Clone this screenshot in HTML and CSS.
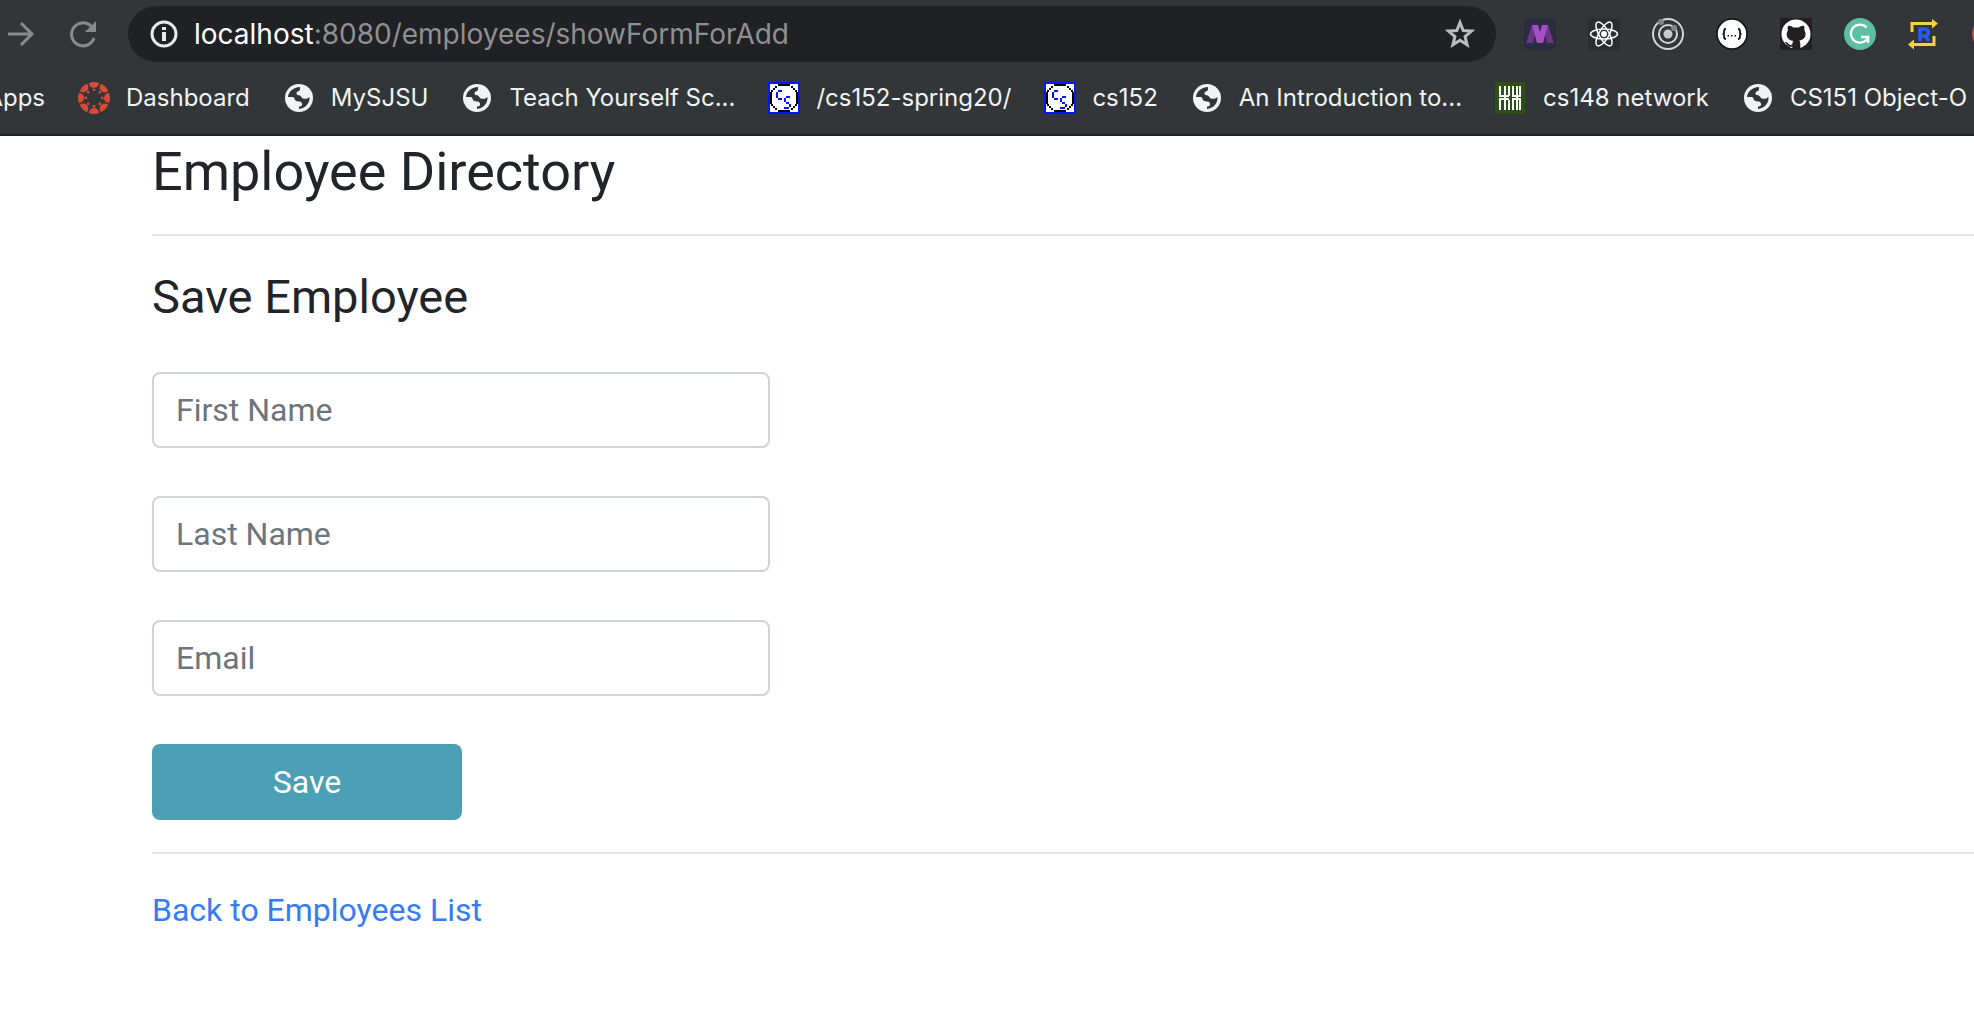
FILE: index.html
```
<!DOCTYPE html>
<html lang="en">
<head>
<meta charset="utf-8">
<title>Save Employee</title>
<link rel="stylesheet" href="styles.css">
</head>
<body>
<svg class="defs" aria-hidden="true">
  <symbol id="globe" viewBox="0 0 32 32">
    <circle cx="16" cy="16" r="14" fill="#f1f3f4"/>
    <path d="M5 15C5.500 9.500 10 5.500 17 5v2.500C17 9.500 13.500 9 13.500 11.500c0 2.500 3.500 1 4.500 3 1 2.500 5 3.500 8.500.500C27 21.500 22 26.500 16 27v-2.500c3.500 0 3.500-2 2.500-4-1-1.500-3.500 0-6-2C11 17 12 15 9 15z" fill="#323639"/>
  </symbol>
  <symbol id="cs" viewBox="0 0 32 32" shape-rendering="crispEdges">
    <path fill="#0018f5" d="M0 0h32v32H0z"/>
    <path fill="#fff" d="M2 2h28v28H2z"/>
    <path d="M10 3h12M10 29h12M3 10v12M29 10v12M8 4v2M6 6v2M4 8v2M24 4v2M26 6v2M28 8v2M8 26v2M6 24v2M4 22v2M24 26v2M26 24v2M28 22v2" fill="none" stroke="#000" stroke-width="2"/>
    <path d="M14 9h-4M9 10v6M10 17h4M22 15h-4M17 16v4M18 21h3M22 22v3M21 26h-5" fill="none" stroke="#0018f5" stroke-width="2"/>
  </symbol>
</svg>

<header class="browser">
  <div class="toolbar">
    <button class="icon-btn" aria-label="Forward">
      <svg viewBox="0 0 32 32"><path d="M4 16h24M17 5l11 11-11 11" fill="none" stroke="#8a8b8c" stroke-width="3"/></svg>
    </button>
    <button class="icon-btn" aria-label="Reload">
      <svg viewBox="0 0 32 32"><path d="M28 20A11.500 11.500 0 1 1 25 8" fill="none" stroke="#8a8b8c" stroke-width="3"/><path d="M30 3v11H19z" fill="#8a8b8c"/></svg>
    </button>
    <div class="omnibox">
      <svg class="icon" viewBox="0 0 32 32"><circle cx="16" cy="16" r="12" fill="none" stroke="#e8eaed" stroke-width="3"/><path d="M14 9h4v3h-4zM14 14h4v9h-4z" fill="#e8eaed"/></svg>
      <span class="url"><span class="host">localhost</span>:8080/employees/showFormForAdd</span>
      <svg class="icon" viewBox="0 0 32 32"><path d="M16 4.500l3.200 8 8.300.600-6.400 5.400 2 8.300-7.100-4.500-7.100 4.500 2-8.300-6.400-5.400 8.300-.600z" fill="none" stroke="#bdbdbd" stroke-width="3"/></svg>
    </div>
    <div class="extensions">
      <svg class="icon" viewBox="0 0 32 32"><rect width="32" height="32" rx="3" fill="#2b2c42"/><path d="M8 7h5L9 25H2zM19 7h5l6 18h-7z" fill="#6d3585"/><path d="M8 7h6l2 7 2-7h6l-5 18h-6z" fill="#a24fbf"/></svg>
      <svg class="icon" viewBox="0 0 32 32"><rect width="32" height="32" rx="3" fill="#2b2e30"/><g fill="none" stroke="#fff" stroke-width="1.500"><ellipse cx="16" cy="16" rx="13.500" ry="5"/><ellipse cx="16" cy="16" rx="13.500" ry="5" transform="rotate(60 16 16)"/><ellipse cx="16" cy="16" rx="13.500" ry="5" transform="rotate(120 16 16)"/></g><circle cx="16" cy="16" r="3" fill="#fff"/></svg>
      <svg class="icon" viewBox="0 0 32 32"><g fill="none" stroke="#d4d4d4" stroke-width="2"><circle cx="16" cy="16" r="15"/><circle cx="16" cy="16" r="9"/></g><circle cx="16" cy="16" r="4.500" fill="#c9c9c9"/><circle cx="9" cy="4" r="3" fill="#858687"/><circle cx="22" cy="10" r="3" fill="#858687"/></svg>
      <svg class="icon" viewBox="0 0 32 32"><circle cx="16" cy="16" r="15" fill="#fff" stroke="#111" stroke-width="1.500"/><path d="M10 11c-4 0 0 5-3.500 5 3.500 0-.500 5 3.500 5M22 11c4 0 0 5 3.500 5-3.500 0 .500 5-3.500 5" fill="none" stroke="#111" stroke-width="1.800"/><path d="M11.500 17h1.500v1.500h-1.500zM15 17h1.500v1.500H15zM18.500 17h1.500v1.500h-1.500z" fill="#111"/></svg>
      <svg class="icon" viewBox="0 0 32 32"><path d="M0 0h32v32H0z" fill="#231f20"/><circle cx="16" cy="16" r="14.500" fill="#fff"/><path d="M8 8c2-.500 4 .500 5 1.500h6C20 8.500 22 7.500 24 8c.700 2 .500 3 .300 4 2.500 4 1.700 9.500-5 10.500.700 1 1 2 1 3.500V32h-8v-3.500c-4 1-5-1-6-2.500-.500-1-1.500-1.500-1.500-2 2-.500 3 1 4 2.200 1 1 2.500.800 3.500.300 0-1.500.500-2.500 1-3.500-6.500-1-8-6.500-5.300-11C7.500 11 7.500 9.500 8 8z" fill="#231f20"/></svg>
      <svg class="icon" viewBox="0 0 32 32"><circle cx="16" cy="16" r="16" fill="#5cc0a0"/><path d="M22.500 9.500a9 9 0 1 0 1 11" fill="none" stroke="#fff" stroke-width="2.200"/><path d="M17 19h7v6" fill="none" stroke="#fff" stroke-width="2.500"/></svg>
      <svg class="icon" viewBox="0 0 32 32"><path d="M4 14V5.500h20M26 18v8.500H6" fill="none" stroke="#f6d33c" stroke-width="3"/><path d="M24 1l6 4.500-6 5zM6 21.500v10l-6-5z" fill="#f6d33c"/><path d="M12 23V11h5a3 3 0 0 1 0 7h-5M16 17l5 6" fill="none" stroke="#2b5bea" stroke-width="3.500"/></svg>
      <svg class="icon" viewBox="0 0 32 32"><circle cx="16" cy="16" r="16" fill="#c0504d"/></svg>
    </div>
  </div>
  <nav class="bookmarks" aria-label="Bookmarks">
    <a class="bookmark apps" href="#">Apps</a>
    <a class="bookmark" href="#"><svg class="icon" viewBox="0 0 32 32"><defs><g id="petal"><path d="M11 1Q16-1 21 1A5 5 0 0 1 11 1z"/><circle cx="16" cy="7.800" r="1.400"/></g></defs><g fill="#d84b37"><use href="#petal"/><use href="#petal" transform="rotate(45 16 16)"/><use href="#petal" transform="rotate(90 16 16)"/><use href="#petal" transform="rotate(135 16 16)"/><use href="#petal" transform="rotate(180 16 16)"/><use href="#petal" transform="rotate(225 16 16)"/><use href="#petal" transform="rotate(270 16 16)"/><use href="#petal" transform="rotate(315 16 16)"/></g></svg>Dashboard</a>
    <a class="bookmark" href="#"><svg class="icon"><use href="#globe"/></svg>MySJSU</a>
    <a class="bookmark" href="#"><svg class="icon"><use href="#globe"/></svg>Teach Yourself Sc...</a>
    <a class="bookmark" href="#"><svg class="icon"><use href="#cs"/></svg>/cs152-spring20/</a>
    <a class="bookmark" href="#"><svg class="icon"><use href="#cs"/></svg>cs152</a>
    <a class="bookmark" href="#"><svg class="icon"><use href="#globe"/></svg>An Introduction to...</a>
    <a class="bookmark" href="#"><svg class="icon" viewBox="0 0 32 32"><path d="M0 0h30v32H0z" fill="#2d5016"/><path d="M5 4v10M10 4v10M14 4v10M18 4v10M22 4v10M25 4v10M5 18v10M10 15v13M14 18v10M18 18v10M22 15v13M25 18v10M4 14h10M17 14h9M4 17h10M17 17h9" fill="none" stroke="#fff" stroke-width="2"/></svg>cs148 network</a>
    <a class="bookmark" href="#"><svg class="icon"><use href="#globe"/></svg>CS151 Object-O</a>
  </nav>
</header>

<main class="page">
  <h1 class="title">Employee Directory</h1>
  <hr class="rule">
  <h2 class="subtitle">Save Employee</h2>
  <form class="form">
    <input class="field" type="text" placeholder="First Name" aria-label="First Name">
    <input class="field" type="text" placeholder="Last Name" aria-label="Last Name">
    <input class="field" type="email" placeholder="Email" aria-label="Email">
    <button class="save" type="submit">Save</button>
  </form>
  <hr class="rule">
  <a class="back" href="#">Back to Employees List</a>
</main>
</body>
</html>
```
FILE: styles.css
```
* {
  box-sizing: border-box;
}

body {
  margin: 0;
  background: #fff;
  color: #212529;
  font-family: Roboto, "Liberation Sans", sans-serif;
  font-size: 32px;
  line-height: 48px;
  overflow-x: hidden;
}

.defs {
  position: absolute;
  width: 0;
  height: 0;
}

.icon {
  display: block;
  flex: none;
  width: 32px;
  height: 32px;
}

/* Browser chrome */

.browser {
  background: #323639;
  border-bottom: 2px solid #202124;
  font-family: Inter, "Liberation Sans", sans-serif;
  overflow: hidden;
}

.toolbar {
  display: flex;
  align-items: center;
  gap: 28px;
  padding: 6px 0 6px 4px;
}

.icon-btn {
  flex: none;
  width: 34px;
  height: 32px;
  padding: 0;
  border: 0;
  background: none;
}

.icon-btn svg {
  display: block;
  width: 32px;
  height: 32px;
}

.omnibox {
  display: flex;
  flex: 1;
  align-items: center;
  gap: 14px;
  min-width: 0;
  height: 56px;
  padding: 0 20px;
  border-radius: 28px;
  background: #202124;
}

.url {
  flex: 1;
  overflow: hidden;
  color: #8f9092;
  font-size: 28px;
  line-height: 40px;
  white-space: nowrap;
}

.host {
  color: #fff;
}

.extensions {
  display: flex;
  flex: 0 0 450px;
  gap: 32px;
  overflow: hidden;
}

.bookmarks {
  display: flex;
  align-items: center;
  gap: 33px;
  padding: 14px 0 20px;
}

.bookmark {
  display: flex;
  flex: none;
  align-items: center;
  gap: 16px;
  color: #f1f3f4;
  font-size: 24px;
  line-height: 32px;
  text-decoration: none;
  white-space: nowrap;
}

.apps {
  justify-content: flex-end;
  width: 45px;
}

/* Page */

.page {
  padding: 2px 0 32px 152px;
}

.title,
.subtitle {
  margin: 0;
  font-weight: 400;
}

.title {
  font-size: 54px;
  line-height: 68px;
}

.subtitle {
  margin-bottom: 46px;
  font-size: 47px;
  line-height: 58px;
}

.rule {
  height: 2px;
  margin: 28px 0 32px;
  border: 0;
  background: #e5e5e5;
}

.form {
  display: flex;
  flex-direction: column;
  align-items: flex-start;
  gap: 48px;
}

.form + .rule {
  margin-top: 32px;
}

.field {
  width: 618px;
  max-width: 100%;
  height: 76px;
  padding: 12px 22px;
  border: 2px solid #ced4da;
  border-radius: 8px;
  background: #fff;
  color: #495057;
  font: inherit;
}

.field::placeholder {
  color: #6c757d;
  opacity: 1;
}

.save {
  width: 310px;
  height: 76px;
  padding: 0;
  border: 0;
  border-radius: 8px;
  background: #4ca0b5;
  color: #fff;
  font: inherit;
}

.back {
  color: #347bf6;
  text-decoration: none;
}
```
